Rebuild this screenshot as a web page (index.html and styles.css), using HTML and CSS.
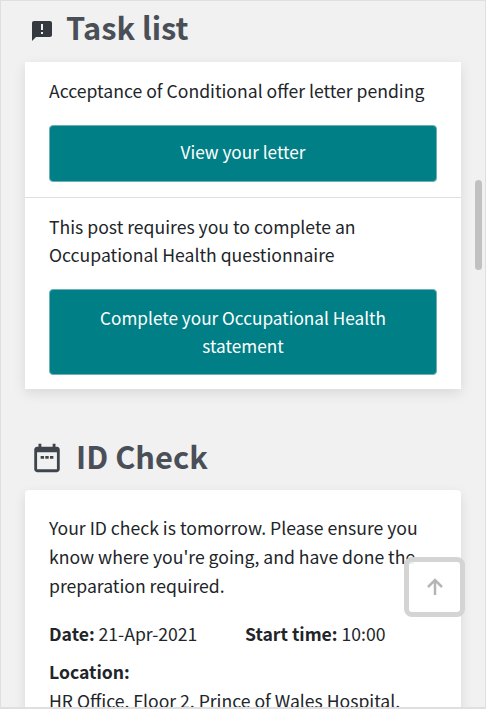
FILE: index.html

```html
<!DOCTYPE html>
<html lang="en">
<head>
    <meta charset="UTF-8">
    <meta name="viewport" content="width=device-width, initial-scale=1.0">
    <title>Task list</title>
    <link rel="stylesheet" href="styles.css">
</head>
<body>
    <div class="window">
        <div class="page">
            <h2 class="section-title task-title">
                <svg class="icon-task" viewBox="0 0 24 24"><path d="M20 2H4c-1.100 0-2 .9-2 2v18l4-4h14c1.100 0 2-.9 2-2V4c0-1.100-.9-2-2-2zm-7 9h-2V5h2v6zm0 4h-2v-2h2v2z"/></svg>
                Task list
            </h2>
            <div class="card task-card">
                <div class="task">
                    <p>Acceptance of Conditional offer letter pending</p>
                    <a class="btn" href="#">View your letter</a>
                </div>
                <div class="task">
                    <p>This post requires you to complete an Occupational Health questionnaire</p>
                    <a class="btn" href="#">Complete your Occupational Health statement</a>
                </div>
            </div>
            <h2 class="section-title id-title">
                <svg class="icon-cal" viewBox="0 0 24 24"><path d="M19 4h-1V2h-2v2H8V2H6v2H5c-1.100 0-2 .9-2 2v14c0 1.100.9 2 2 2h14c1.100 0 2-.9 2-2V6c0-1.100-.9-2-2-2zm0 16H5V8h14v12z"/><path d="M7.500 10.500h2.400v2H7.500zM10.800 10.500h2.400v2h-2.400zM14.100 10.500h2.400v2h-2.400z"/></svg>
                ID Check
            </h2>
            <div class="card id-card">
                <p>Your ID check is tomorrow. Please ensure you know where you're going, and have done the preparation required.</p>
                <div class="id-times">
                    <span class="id-date"><b>Date:</b> 21-Apr-2021</span>
                    <span><b>Start time:</b> 10:00</span>
                </div>
                <div class="id-location">
                    <b>Location:</b><br>
                    HR Office, Floor 2, Prince of Wales Hospital,
                </div>
            </div>
        </div>
        <a class="to-top" href="#">
            <svg viewBox="0 0 24 24"><path d="M12 20V5M5 12l7-7 7 7"/></svg>
        </a>
        <div class="scroll-thumb"></div>
    </div>
</body>
</html>
```

FILE: styles.css

```css
html, body {
    margin: 0;
    height: 100%;
    overflow: hidden;
}
body {
    font-family: "Noto Sans CJK JP", "Open Sans", sans-serif;
    font-size: 17.6px;
    line-height: 28.16px;
    color: #212529;
    background-color: #f1f1f1;
}
.window {
    position: relative;
    height: 709px;
    box-sizing: border-box;
    border: 1px solid #dfdfdf;
    border-bottom-width: 2px;
    overflow: hidden;
}
.page {
    width: 436px;
    margin-left: 24px;
}
.section-title {
    display: flex;
    align-items: center;
    margin: 0;
    font-size: 30.8px;
    line-height: 40px;
    font-weight: 700;
    color: #4a4f57;
}
.task-title {
    height: 61px;
    padding-bottom: 10px;
    box-sizing: border-box;
    gap: 12px;
}
.id-title {
    height: 101px;
    padding-top: 33px;
    padding-bottom: 1px;
    box-sizing: border-box;
    gap: 12px;
}
.icon-task {
    width: 24px;
    height: 24px;
    margin-left: 5px;
    margin-top: 8px;
    fill: #343a40;
}
.icon-cal {
    width: 34px;
    height: 34px;
    margin-left: 5px;
    margin-top: 4px;
    fill: #3f454c;
}
.card {
    background-color: white;
    box-shadow: 0 4px 12px rgba(0, 0, 0, 0.1);
}
.card p {
    margin: 0;
}
.task {
    padding: 14.6px 24px;
    border-bottom: 1px solid #dfdfdf;
}
.task:last-child {
    border-bottom: none;
}
.btn {
    display: block;
    margin-top: 20.4px;
    padding: 13.5px 16px 13.700px;
    box-sizing: border-box;
    background-color: #008086;
    border: 1px solid #6fb0b4;
    border-radius: 4px;
    color: white;
    font-size: 17.2px;
    text-align: center;
    text-decoration: none;
}
.task:first-child .btn {
    padding-top: 12px;
    padding-bottom: 15.200px;
}
.id-card {
    padding: 24px;
    border-radius: 4px;
}
.id-card p {
    line-height: 28.6px;
}
.id-times {
    display: flex;
    margin-top: 20px;
}
.id-date {
    width: 196px;
}
.id-location {
    margin-top: 10px;
    white-space: nowrap;
}
.to-top {
    position: absolute;
    left: 403px;
    top: 556px;
    width: 51px;
    height: 50px;
    display: flex;
    align-items: center;
    justify-content: center;
    background-color: rgba(255, 255, 255, 0.9);
    border: 5px solid #d4d4d4;
    border-radius: 8px;
}
.to-top svg {
    width: 24px;
    height: 24px;
    fill: none;
    stroke: #b5b5b5;
    stroke-width: 2.500;
}
.scroll-thumb {
    position: absolute;
    left: 474px;
    top: 179px;
    width: 7px;
    height: 90px;
    border-radius: 4px;
    background-color: #c1c1c1;
}
```
